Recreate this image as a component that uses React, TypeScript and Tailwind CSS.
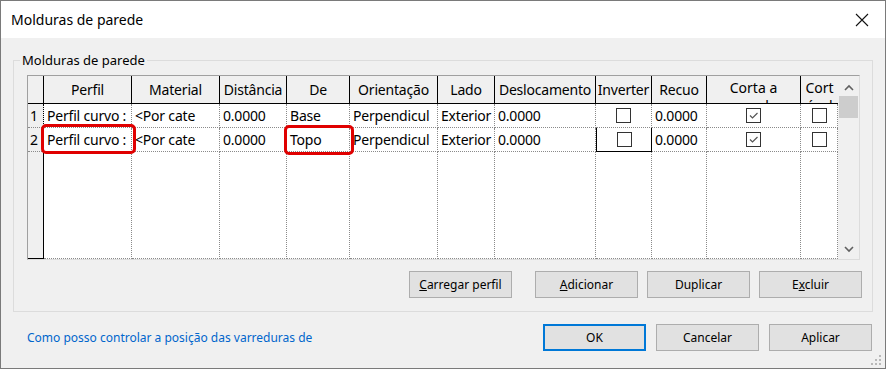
import React from "react";

const font = { fontFamily: '"Noto Sans", "Open Sans", sans-serif' };

const Check = ({ checked }: { checked?: boolean }) => (
  <div className="w-[15px] h-[15px] border border-[#333] bg-white flex items-center justify-center">
    {checked && (
      <svg width="11" height="11" viewBox="0 0 11 11">
        <path d="M2 5.5 L4.5 8 L9.5 3" fill="none" stroke="#555" strokeWidth="1.2" />
      </svg>
    )}
  </div>
);

const Btn = ({ children, className = "" }: { children: React.ReactNode; className?: string }) => (
  <button
    className={`h-[27px] w-[103px] bg-[#e1e1e1] border border-[#adadad] text-[12px] text-black flex items-center justify-center ${className}`}
  >
    {children}
  </button>
);

const headers = [
  "Perfil",
  "Material",
  "Distância",
  "De",
  "Orientação",
  "Lado",
  "Deslocamento",
  "Inverter",
  "Recuo",
];

const rows = [
  ["Perfil curvo :", "<Por cate", "0.0000", "Base", "Perpendicul", "Exterior", "0.0000"],
  ["Perfil curvo :", "<Por cate", "0.0000", "Topo", "Perpendicul", "Exterior", "0.0000"],
];

const cell = "border-r border-b border-dotted border-[#8a8a8a] bg-white";
const txt = "text-[14px] text-black px-[3px] flex items-center whitespace-nowrap overflow-hidden tracking-[-0.2px]";

export default function App() {
  return (
    <div style={font} className="w-[886px] h-[369px] border border-[#7a7a7a] bg-[#f0f0f0] flex flex-col overflow-hidden">
      {/* title bar */}
      <div className="h-[37px] bg-white flex items-center justify-between pl-[10px] pr-[16px] shrink-0">
        <span className="text-[14px] text-black">Molduras de parede</span>
        <svg width="14" height="14" viewBox="0 0 14 14">
          <path d="M1 1 L13 13 M13 1 L1 13" stroke="#111" strokeWidth="1.1" />
        </svg>
      </div>

      {/* group */}
      <fieldset className="mx-[12px] mt-[13px] border border-[#dcdcdc] pl-[13px] pr-[10px] pb-[13px] min-w-0">
        <legend className="ml-[-7px] px-[2px] text-[13px] leading-[18px] text-black">Molduras de parede</legend>

        <div className="relative mt-[6px] flex border-t border-l border-t-[#a0a0a0] border-l-[#a0a0a0] border-r border-b border-r-[#dcdcdc] border-b-[#dcdcdc] w-[833px] h-[185px]">
          <div className="grid grid-cols-[16px_88px_88px_67px_63px_88px_57px_101px_56px_55px_94px_37px] grid-rows-[28px_24px_24px_1fr] flex-1">
            {/* header */}
            <div className="bg-[#f0f0f0] border-r border-b border-black" />
            {headers.map((h) => (
              <div
                key={h}
                className="bg-[#f0f0f0] border-r border-b border-[#000] text-[14px] tracking-[-0.2px] text-black flex items-center justify-center whitespace-nowrap overflow-hidden"
              >
                {h}
              </div>
            ))}
            <div className="bg-[#f0f0f0] border-r border-b border-[#000] text-[14px] text-black text-center leading-[18px] pt-[3px] overflow-hidden whitespace-nowrap">
              Corta a<br />parede
            </div>
            <div className="bg-[#f0f0f0] border-b border-[#000] text-[14px] text-black text-center leading-[18px] pt-[3px] overflow-hidden whitespace-nowrap">
              Cort<br />ável
            </div>

            {/* rows */}
            {rows.map((r, i) => (
              <React.Fragment key={i}>
                <div className="bg-[#f0f0f0] border-r border-black border-b border-b-[#8a8a8a] border-dotted text-[14px] text-black pl-[2px] flex items-center">
                  {i + 1}
                </div>
                {r.map((v, j) => (
                  <div key={j} className={`${cell} ${txt}`}>
                    {v}
                  </div>
                ))}
                <div className={`${cell} flex items-center justify-center ${i === 1 ? "!border-solid !border-black border-l" : ""}`}>
                  <Check />
                </div>
                <div className={`${cell} ${txt}`}>0.0000</div>
                <div className={`${cell} flex items-center justify-center`}>
                  <Check checked />
                </div>
                <div className={`${cell} flex items-center justify-center`}>
                  <Check />
                </div>
              </React.Fragment>
            ))}

            {/* filler */}
            <div className="bg-[#f0f0f0] border-r border-b border-black" />
            {Array.from({ length: 11 }).map((_, k) => (
              <div key={k} className={cell} />
            ))}
          </div>

          {/* scrollbar */}
          <div className="w-[22px] bg-[#f0f0f0] flex flex-col items-center">
            <svg width="12" height="12" viewBox="0 0 12 12" className="mt-[6px]">
              <path d="M2 8 L6 4 L10 8" fill="none" stroke="#606060" strokeWidth="1.6" />
            </svg>
            <div className="w-[19px] h-[22px] bg-[#cdcdcd] mt-[2px]" />
            <div className="flex-1" />
            <svg width="12" height="12" viewBox="0 0 12 12" className="mb-[4px]">
              <path d="M2 4 L6 8 L10 4" fill="none" stroke="#606060" strokeWidth="1.6" />
            </svg>
          </div>

          {/* highlight boxes */}
          <div className="absolute left-[13px] top-[48px] w-[95px] h-[30px] border-[3px] border-[#e00000] rounded-[5px]" />
          <div className="absolute left-[256px] top-[49px] w-[70px] h-[30px] border-[3px] border-[#e00000] rounded-[5px]" />
        </div>

        <div className="flex justify-end gap-[23px] mt-[11px]">
          <Btn>
            <span><span className="underline">C</span>arregar perfil</span>
          </Btn>
          <div className="flex gap-[9px]">
            <Btn>
              <span><span className="underline">A</span>dicionar</span>
            </Btn>
            <Btn>Duplicar</Btn>
            <Btn>
              <span>E<span className="underline">x</span>cluir</span>
            </Btn>
          </div>
        </div>
      </fieldset>

      {/* bottom */}
      <div className="flex items-center justify-between pl-[26px] pr-[13px] mt-[12px]">
        <span className="text-[12px] text-[#0066cc]">Como posso controlar a posição das varreduras de</span>
        <div className="flex gap-[10px]">
          <Btn className="!border-2 !border-[#0078d7]">OK</Btn>
          <Btn>Cancelar</Btn>
          <Btn>Aplicar</Btn>
        </div>
      </div>
      <div className="flex-1 flex justify-end items-end pr-[3px] pb-[2px]">
        <svg width="12" height="12" viewBox="0 0 12 12">
          <g fill="#b8b8b8">
            <rect x="9" y="1" width="2" height="2" />
            <rect x="5" y="5" width="2" height="2" />
            <rect x="9" y="5" width="2" height="2" />
            <rect x="1" y="9" width="2" height="2" />
            <rect x="5" y="9" width="2" height="2" />
            <rect x="9" y="9" width="2" height="2" />
          </g>
        </svg>
      </div>
    </div>
  );
}
